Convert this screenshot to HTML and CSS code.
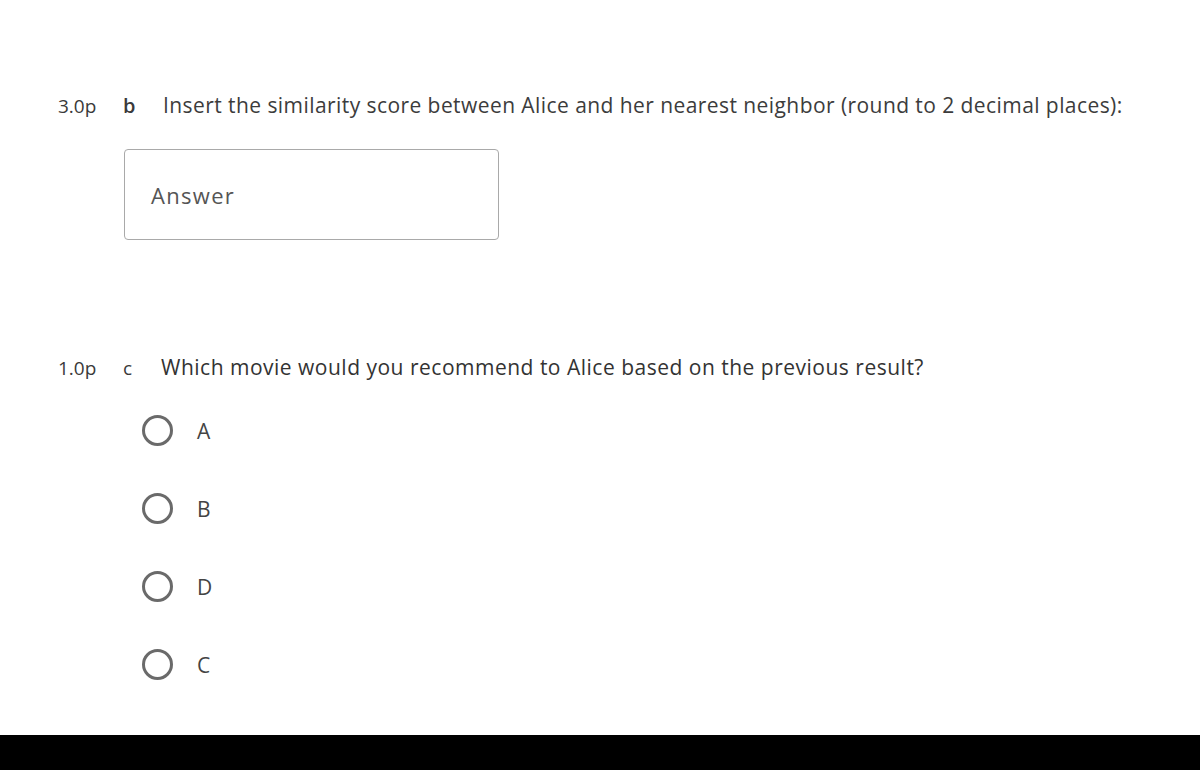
FILE: index.html
```html
<!DOCTYPE html>
<html>
<head>
<meta charset="utf-8">
<link rel="stylesheet" href="styles.css">
</head>
<body>
<div class="page">
  <div class="question q-b">
    <div class="qhead">
      <span class="points">3.0p</span>
      <span class="label">b</span>
      <span class="qtext">Insert the similarity score between Alice and her nearest neighbor (round to 2 decimal places):</span>
    </div>
    <div class="answer-box"><span class="placeholder">Answer</span></div>
  </div>
  <div class="question q-c">
    <div class="qhead">
      <span class="points">1.0p</span>
      <span class="label label-c">c</span>
      <span class="qtext qtext-c">Which movie would you recommend to Alice based on the previous result?</span>
    </div>
    <ul class="options">
      <li class="option"><span class="radio"></span><span class="opt">A</span></li>
      <li class="option"><span class="radio"></span><span class="opt">B</span></li>
      <li class="option"><span class="radio"></span><span class="opt">D</span></li>
      <li class="option"><span class="radio"></span><span class="opt">C</span></li>
    </ul>
  </div>
</div>
<div class="bottom-bar"></div>
</body>
</html>
```
FILE: styles.css
```css
html, body {
  margin: 0;
  padding: 0;
  background: #fff;
}
body {
  width: 1200px;
  height: 770px;
  overflow: hidden;
  display: flex;
  flex-direction: column;
  font-family: "Open Sans", "Lato", sans-serif;
  color: #333;
}
.page {
  flex: 1;
  padding: 91px 0 0 58px;
}
.qhead {
  display: flex;
  align-items: baseline;
}
.points {
  width: 65px;
  font-size: 19px;
  color: #3a3a3a;
}
.label {
  width: 40px;
  font-size: 20px;
  font-weight: 600;
  color: #3a3a3a;
}
.label-c {
  width: 38px;
  font-weight: 400;
  font-size: 19px;
}
.qtext {
  font-size: 21px;
  letter-spacing: 0.43px;
  color: #3c3c3c;
}
.qtext-c {
  letter-spacing: 0.5px;
  color: #333;
}
.answer-box {
  margin: 30px 0 0 66px;
  border: 1px solid #a9a9a9;
  border-radius: 4px;
  display: flex;
  align-items: center;
  padding-left: 26px;
  box-sizing: border-box;
  height: 91px;
  width: 375px;
}
.placeholder {
  font-size: 22px;
  color: #555;
  letter-spacing: 1.3px;
}
.q-c {
  margin-top: 113px;
}
.options {
  list-style: none;
  margin: 34px 0 0 84px;
  padding: 0;
  display: flex;
  flex-direction: column;
  gap: 47px;
}
.option {
  display: flex;
  align-items: center;
  height: 31px;
}
.radio {
  width: 25px;
  height: 25px;
  border: 3px solid #6a6a6a;
  border-radius: 50%;
  flex: none;
}
.opt {
  margin-left: 24px;
  font-size: 21px;
  color: #444;
}
.bottom-bar {
  height: 35px;
  background: #000;
  flex: none;
}
```
